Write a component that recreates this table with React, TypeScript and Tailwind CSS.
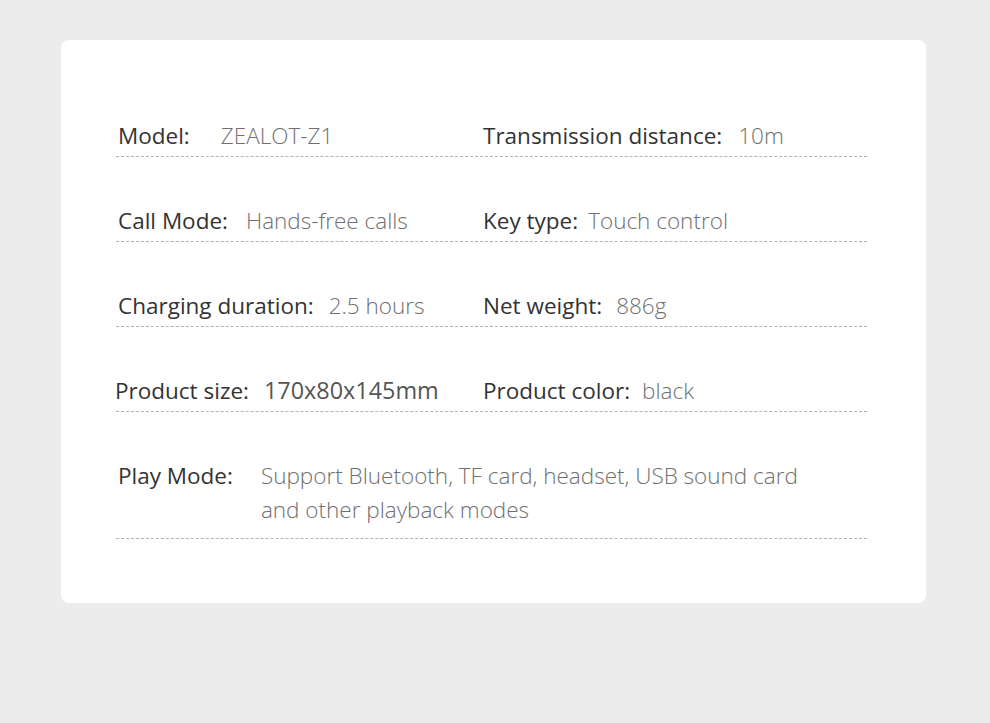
const specs = [
  [
    { label: "Model:", value: "ZEALOT-Z1", gap: "ml-[31px]" },
    { label: "Transmission distance:", value: "10m", gap: "ml-[16px]" },
  ],
  [
    { label: "Call Mode:", value: "Hands-free calls", gap: "ml-[18px]" },
    { label: "Key type:", value: "Touch control", gap: "ml-[10px]" },
  ],
  [
    { label: "Charging duration:", value: "2.5 hours", gap: "ml-[15px]" },
    { label: "Net weight:", value: "886g", gap: "ml-[14px]" },
  ],
  [
    { label: "Product size:", value: "170x80x145mm", gap: "ml-[15px]" },
    { label: "Product color:", value: "black", gap: "ml-[12px]" },
  ],
];

export default function App() {
  return (
    <div className="min-h-[723px] bg-[#ebeceb] pt-[40px] font-['Open_Sans',sans-serif]">
      <div className="ml-[61px] w-[865px] rounded-[8px] bg-white pl-[55px] pr-[59px] pt-[32px] pb-[64px]">

        {/* ================= TWO-COLUMN ROWS ================= */}
        {specs.map((row, i) => (
          <div
            key={i}
            className="grid h-[85px] grid-cols-[365px_1fr] items-end border-b border-dashed border-[#b3b3b3] pb-[6px]"
          >
            {row.map((item) => (
              <div key={item.label} className="flex items-baseline leading-[28px] whitespace-nowrap">
                <span className={`text-[22.5px] text-[#333] ${item.label === "Product size:" ? "-ml-[1px]" : "ml-[2px]"}`}>
                  {item.label}
                </span>
                <span
                  className={`${item.gap} ${
                    item.value === "170x80x145mm"
                      ? "text-[23.4px] text-[#555] font-normal"
                      : "text-[22.5px] text-[#6f6f6f] font-light"
                  }`}
                >
                  {item.value}
                </span>
              </div>
            ))}
          </div>
        ))}

        {/* ================= PLAY MODE ================= */}
        <div className="flex border-b border-dashed border-[#b3b3b3] pt-[47px] pb-[11px] leading-[34px]">
          <span className="ml-[2px] text-[22.5px] text-[#333] whitespace-nowrap">Play Mode:</span>
          <span className="ml-[28px] w-[570px] text-[22.5px] font-light text-[#6f6f6f]">
            Support Bluetooth, TF card, headset, USB sound card and other playback modes
          </span>
        </div>

      </div>
    </div>
  );
}
